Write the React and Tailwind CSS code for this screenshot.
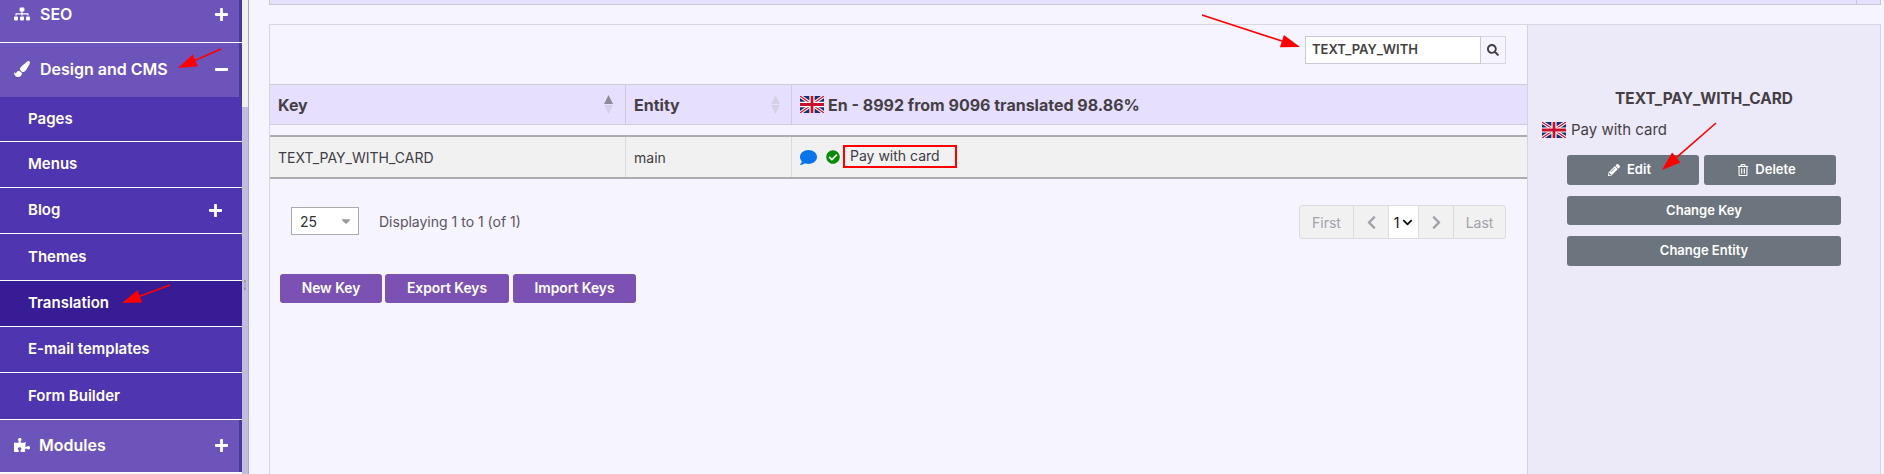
import React from 'react';
import {
  FaSitemap,
  FaPaintBrush,
  FaPuzzlePiece,
  FaPlus,
  FaMinus,
  FaSearch,
  FaPencilAlt,
  FaRegTrashAlt,
  FaComment,
  FaCheckCircle,
  FaChevronLeft,
  FaChevronRight,
  FaChevronDown,
  FaCaretDown,
} from 'react-icons/fa';

const UkFlag = ({ className }) => (
  <svg className={className} viewBox="0 0 60 40" preserveAspectRatio="none">
    <rect width="60" height="40" fill="#1f2f6e" />
    <path d="M0 0L60 40M60 0L0 40" stroke="#fff" strokeWidth="8" />
    <path d="M0 0L60 40M60 0L0 40" stroke="#c8102e" strokeWidth="3" />
    <path d="M30 0V40M0 20H60" stroke="#fff" strokeWidth="13" />
    <path d="M30 0V40M0 20H60" stroke="#c8102e" strokeWidth="7" />
  </svg>
);

const SortIcon = ({ active }) => (
  <svg width="9" height="19" viewBox="0 0 9 19">
    <path d="M4.5 0L9 9H0Z" fill={active ? '#8f8a99' : '#d5cfe8'} />
    <path d="M4.5 19L9 10H0Z" fill="#d5cfe8" />
  </svg>
);

const Arrow = ({ x1, y1, x2, y2 }) => {
  const a = Math.atan2(y2 - y1, x2 - x1);
  const bx = x2 - Math.cos(a) * 19;
  const by = y2 - Math.sin(a) * 19;
  const nx = -Math.sin(a) * 6.5;
  const ny = Math.cos(a) * 6.5;
  return (
    <g>
      <line x1={x1} y1={y1} x2={bx} y2={by} stroke="#f00" strokeWidth="1.6" />
      <polygon points={`${x2},${y2} ${bx + nx},${by + ny} ${bx - nx},${by - ny}`} fill="#f00" />
    </g>
  );
};

const TopItem = ({ icon: Icon, label, sign: Sign, gap, height }) => (
  <div className={`flex ${height} items-center border-r-[3px] border-r-[#443a99] bg-[#6c54bb] pb-[2px] pl-[14px] pr-[10px] text-white`}>
    <Icon className="w-4 text-[16px]" />
    <span className={`${gap} flex-1 text-[16px] font-semibold`}>{label}</span>
    <Sign className="text-[15px]" />
  </div>
);

const SubItem = ({ label, active, plus, height = 'h-[45px]' }) => (
  <div
    className={`flex ${height} items-center pl-[28px] pr-[19px] text-[15px] font-semibold text-white ${
      active ? 'bg-[#381c96]' : 'bg-[#5035b0]'
    }`}
  >
    <span className="flex-1">{label}</span>
    {plus && <FaPlus className="text-[15px]" />}
  </div>
);

const Line = () => <div className="h-px bg-white" />;

const Sidebar = () => (
  <div className="-mt-3 flex w-[242px] shrink-0 flex-col">
    <TopItem icon={FaSitemap} label="SEO" sign={FaPlus} gap="ml-[10px]" height="h-[54px]" />
    <Line />
    <TopItem icon={FaPaintBrush} label="Design and CMS" sign={FaMinus} gap="ml-[10px]" height="h-[54px]" />
    <SubItem label="Pages" height="h-[44px]" />
    <Line />
    <SubItem label="Menus" />
    <Line />
    <SubItem label="Blog" plus />
    <Line />
    <SubItem label="Themes" height="h-[46px]" />
    <Line />
    <SubItem label="Translation" active />
    <Line />
    <SubItem label="E-mail templates" />
    <Line />
    <SubItem label="Form Builder" height="h-[46px]" />
    <Line />
    <TopItem icon={FaPuzzlePiece} label="Modules" sign={FaPlus} gap="ml-[9px]" height="h-[52px]" />
    <Line />
  </div>
);

const Splitter = () => (
  <div className="flex w-[7px] shrink-0 flex-col border-r border-r-[#a9a6b8] bg-[#f0f0f0]">
    <div className="h-[107px]" />
    <div className="flex flex-1 items-center justify-center bg-[#c2bde0] pb-[11px]">
      <div className="h-[10px] w-[2px] border-y-2 border-y-[#9d98b8] bg-[#b0abcd]" />
    </div>
  </div>
);

const PageButton = ({ children, className = '' }) => (
  <div className={`flex h-full items-center justify-center border-r border-r-[#dcdce0] text-[14px] text-[#a2a2aa] ${className}`}>
    {children}
  </div>
);

const ActionButton = ({ children, className = '' }) => (
  <div className={`flex h-[29px] items-center justify-center rounded-[3px] bg-[#7b52b3] text-[13.8px] font-semibold text-white ${className}`}>
    {children}
  </div>
);

const GrayButton = ({ children, className = '' }) => (
  <div className={`flex items-center justify-center rounded-[3px] bg-[#6c757d] text-[13px] font-semibold text-white ${className}`}>
    {children}
  </div>
);

const TablePanel = () => (
  <div className="flex w-[1257px] shrink-0 flex-col">
    <div className="flex h-[59px] items-center justify-end pb-[9px] pr-[21px]">
      <div className="flex h-[28px] w-[176px] items-center border border-[#c9c9d4] bg-white pl-[6px] text-[13px] font-semibold text-[#453f45]">
        TEXT_PAY_WITH
      </div>
      <div className="flex h-[28px] w-[25px] items-center justify-center border border-l-0 border-[#d6d6de] text-[#453f45]">
        <FaSearch className="text-[12px]" />
      </div>
    </div>

    <div className="flex h-[41px] border-y border-y-[#cfcbdc] bg-[#e6dffe] text-[16px] font-bold text-[#453f45]">
      <div className="flex w-[356px] items-center justify-between border-r border-r-[#cfcbdc] pl-2 pr-[12px]">
        Key
        <SortIcon active />
      </div>
      <div className="flex w-[166px] items-center justify-between border-r border-r-[#cfcbdc] pl-2 pr-[11px]">
        Entity
        <SortIcon />
      </div>
      <div className="flex items-center pl-2">
        <UkFlag className="mr-[4px] h-[17px] w-[24px]" />
        En - 8992 from 9096 translated 98.86%
      </div>
    </div>

    <div className="h-[10px]" />

    <div className="flex h-[44px] border-y-2 border-y-[#ababb0] bg-[#f1f1f1] text-[14px] text-[#3f3d45]">
      <div className="flex w-[356px] items-center border-r border-r-[#dcdce0] pl-2">TEXT_PAY_WITH_CARD</div>
      <div className="flex w-[166px] items-center border-r border-r-[#dcdce0] pl-2">main</div>
      <div className="flex items-center pl-2">
        <FaComment className="text-[17px] text-[#0a74ea]" />
        <FaCheckCircle className="ml-[9px] text-[14px] text-[#0a8a0a]" />
        <span className="mb-[1px] ml-[3px] flex h-[23px] w-[114px] items-center whitespace-nowrap border-2 border-[#f00] pb-[2px] pl-[5px] text-[14px]">
          Pay with card
        </span>
      </div>
    </div>

    <div className="mt-[26px] flex h-[34px] items-center px-[21px]">
      <div className="mb-[2px] flex h-[28px] w-[68px] items-center justify-between border border-[#aaa] bg-white pl-[8px] pr-[5px] text-[14px] text-[#333]">
        25
        <FaCaretDown className="text-[14px] text-[#999]" />
      </div>
      <span className="mb-[2px] ml-5 flex-1 text-[14px] text-[#5b5560]">Displaying 1 to 1 (of 1)</span>
      <div className="flex h-[34px] w-[207px] overflow-hidden rounded-[3px] border border-[#dcdce0] bg-[#f1f1f1]">
        <PageButton className="w-[54px]">First</PageButton>
        <PageButton className="w-[35px]">
          <FaChevronLeft className="text-[15px]" />
        </PageButton>
        <PageButton className="w-[30px] gap-[3px] bg-white !text-[#111]">
          1
          <FaChevronDown className="text-[11px]" />
        </PageButton>
        <PageButton className="w-[35px]">
          <FaChevronRight className="text-[15px]" />
        </PageButton>
        <PageButton className="flex-1 border-r-0">Last</PageButton>
      </div>
    </div>

    <div className="mt-[35px] flex pl-[10px]">
      <ActionButton className="w-[102px]">New Key</ActionButton>
      <ActionButton className="ml-[3px] w-[124px]">Export Keys</ActionButton>
      <ActionButton className="ml-[4px] w-[123px]">Import Keys</ActionButton>
    </div>
  </div>
);

const DetailPanel = () => (
  <div className="flex-1 border-l border-l-[#d5d3de] bg-[#ece9f8] pl-[14px] text-[#453f45]">
    <div className="mt-[64px] pr-[14px] text-center text-[15.4px] leading-[20px] font-bold">TEXT_PAY_WITH_CARD</div>
    <div className="mt-[11px] flex h-[20px] items-center text-[15px]">
      <UkFlag className="mr-[5px] h-[16px] w-[24px]" />
      Pay with card
    </div>
    <div className="mt-[15px] ml-[25px] flex w-[274px] flex-col gap-[11px]">
      <div className="flex gap-[5px]">
        <GrayButton className="h-[30px] w-[132px] gap-[7px] pr-[7px]">
          <FaPencilAlt className="text-[12px]" />
          Edit
        </GrayButton>
        <GrayButton className="h-[30px] w-[132px] gap-[6px] pr-[7px]">
          <FaRegTrashAlt className="text-[12px]" />
          Delete
        </GrayButton>
      </div>
      <GrayButton className="h-[29px]">Change Key</GrayButton>
      <GrayButton className="h-[30px]">Change Entity</GrayButton>
    </div>
  </div>
);

export default function App() {
  return (
    <div className="relative flex h-[474px] w-[1884px] overflow-hidden bg-[#f6f4ff] font-['Inter',sans-serif]">
      <Sidebar />
      <Splitter />
      <div className="flex flex-1 flex-col pl-5 pr-[3px]">
        <div className="flex h-[5px] justify-end border-x border-b border-[#c9c6d6] bg-[#e6e0fd]">
          <div className="w-[24px] border-l border-l-[#c9c6d6]" />
        </div>
        <div className="mt-[19px] flex flex-1 border-x border-t border-[#d8d6e2]">
          <TablePanel />
          <DetailPanel />
        </div>
      </div>

      <svg className="pointer-events-none absolute inset-0" width="1884" height="474">
        <Arrow x1={221} y1={49} x2={178} y2={68} />
        <Arrow x1={170} y1={285} x2={122} y2={303} />
        <Arrow x1={1202} y1={15} x2={1300} y2={47} />
        <Arrow x1={1716} y1={123} x2={1662} y2={170} />
      </svg>
    </div>
  );
}
